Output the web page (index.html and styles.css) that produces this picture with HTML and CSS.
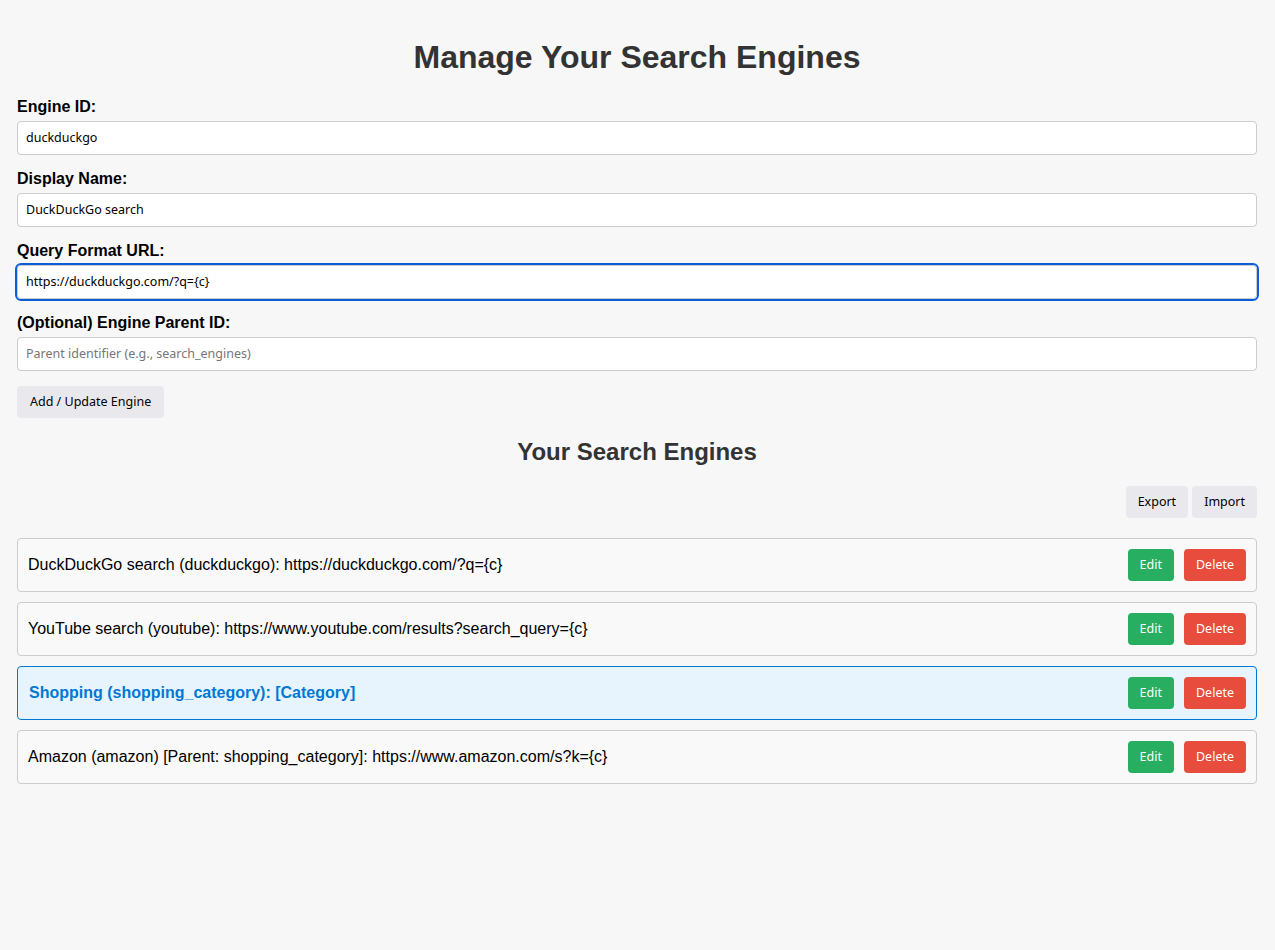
FILE: index.html
```html
<!DOCTYPE html>
<html lang="en">
<head>
<meta charset="utf-8">
<title>Manage Your Search Engines</title>
<link rel="stylesheet" href="styles.css">
</head>
<body>
<div class="container">
  <h1 class="title">Manage Your Search Engines</h1>
  <form class="engine-form">
    <label class="field-label" for="engine-id">Engine ID:</label>
    <input class="field-input" id="engine-id" type="text" value="duckduckgo">
    <label class="field-label" for="display-name">Display Name:</label>
    <input class="field-input" id="display-name" type="text" value="DuckDuckGo search">
    <label class="field-label" for="query-url">Query Format URL:</label>
    <input class="field-input is-focused" id="query-url" type="text" value="https://duckduckgo.com/?q={c}">
    <label class="field-label" for="parent-id">(Optional) Engine Parent ID:</label>
    <input class="field-input" id="parent-id" type="text" placeholder="Parent identifier (e.g., search_engines)">
    <div class="form-actions">
      <button type="button" class="btn btn-plain btn-wide">Add / Update Engine</button>
    </div>
  </form>

  <h2 class="subtitle">Your Search Engines</h2>
  <div class="toolbar">
    <button type="button" class="btn btn-plain">Export</button>
    <button type="button" class="btn btn-plain">Import</button>
  </div>

  <ul class="engine-list">
    <li class="engine-item">
      <span class="engine-text">DuckDuckGo search (duckduckgo): https://duckduckgo.com/?q={c}</span>
      <div class="engine-actions">
        <button type="button" class="btn btn-edit">Edit</button>
        <button type="button" class="btn btn-delete">Delete</button>
      </div>
    </li>
    <li class="engine-item">
      <span class="engine-text">YouTube search (youtube): https://www.youtube.com/results?search_query={c}</span>
      <div class="engine-actions">
        <button type="button" class="btn btn-edit">Edit</button>
        <button type="button" class="btn btn-delete">Delete</button>
      </div>
    </li>
    <li class="engine-item is-category">
      <span class="engine-text">Shopping (shopping_category): [Category]</span>
      <div class="engine-actions">
        <button type="button" class="btn btn-edit">Edit</button>
        <button type="button" class="btn btn-delete">Delete</button>
      </div>
    </li>
    <li class="engine-item">
      <span class="engine-text">Amazon (amazon) [Parent: shopping_category]: https://www.amazon.com/s?k={c}</span>
      <div class="engine-actions">
        <button type="button" class="btn btn-edit">Edit</button>
        <button type="button" class="btn btn-delete">Delete</button>
      </div>
    </li>
  </ul>
</div>
</body>
</html>
```

FILE: styles.css
```css
html, body {
  margin: 0;
  background: #f7f7f7;
}

body {
  font-family: "Liberation Sans", Arial, sans-serif;
  color: #000;
  padding: 18px 18px 18px 17px;
}

.container {
  display: flex;
  flex-direction: column;
}

.title {
  font-size: 32px;
  font-weight: bold;
  color: #333;
  text-align: center;
  margin: 0.67em 0;
  line-height: normal;
}

.engine-form {
  display: flex;
  flex-direction: column;
}

.field-label {
  font-size: 16px;
  font-weight: bold;
  line-height: normal;
  margin-bottom: 5px;
}

.field-input {
  box-sizing: border-box;
  height: 34px;
  margin: 0 0 15px;
  padding: 0 8px;
  border: 1px solid #ccc;
  border-radius: 4px;
  background: #fff;
  font-family: "Noto Sans", "DejaVu Sans", sans-serif;
  font-size: 12.5px;
  color: #000;
}

.field-input::placeholder {
  color: #767676;
}

.field-input:focus,
.field-input.is-focused {
  outline: 2px solid #0b5fd6;
  outline-offset: 0;
}

.form-actions {
  display: flex;
}

.btn {
  box-sizing: border-box;
  height: 32px;
  padding: 0 12px;
  border: none;
  border-radius: 4px;
  font-family: "Noto Sans", "DejaVu Sans", sans-serif;
  font-size: 12.5px;
  cursor: pointer;
}

.btn-wide {
  padding: 0 13px;
}

.btn-plain {
  background: #e9e9ed;
  color: #000;
}

.btn-edit {
  background: #27ae60;
  color: #fff;
}

.btn-delete {
  background: #e74c3c;
  color: #fff;
}

.subtitle {
  font-size: 24px;
  font-weight: bold;
  color: #333;
  text-align: center;
  margin: 20px 0 20px;
  line-height: normal;
}

.toolbar {
  display: flex;
  justify-content: flex-end;
  gap: 4px;
  margin-bottom: 20px;
}

.engine-list {
  list-style: none;
  margin: 0;
  padding: 0;
  display: flex;
  flex-direction: column;
  gap: 10px;
}

.engine-item {
  display: flex;
  align-items: center;
  justify-content: space-between;
  padding: 10px;
  border: 1px solid #ccc;
  border-radius: 4px;
  background: #f9f9f9;
}

.engine-text {
  font-size: 16px;
}

.engine-actions {
  display: flex;
  gap: 10px;
}

.engine-item.is-category {
  background: #e8f4fd;
  border-color: #0078d4;
}

.engine-item.is-category .engine-text {
  color: #0078d4;
  font-weight: bold;
  padding-left: 1px;
}
```
